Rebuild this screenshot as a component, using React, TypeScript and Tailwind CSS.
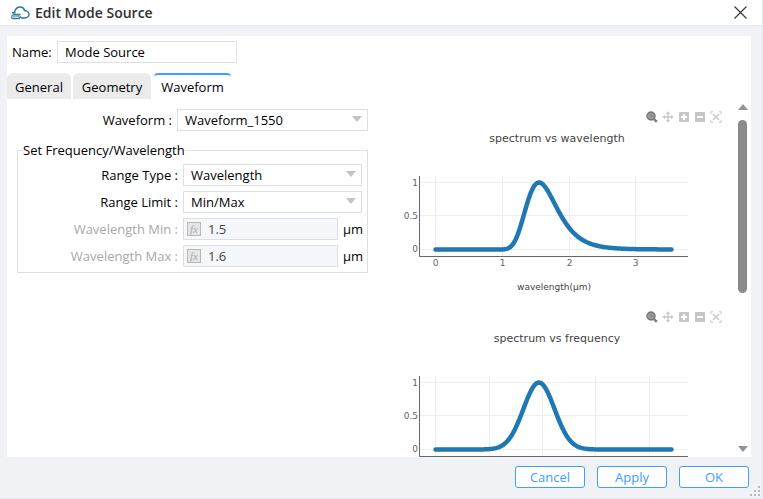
import React from "react";

const line = (f: (t: number) => number) => {
  const points: string[] = [];
  for (let i = 0; i <= 236; i++) {
    points.push(`${51.5 + i},${(149.5 - 67 * f(i)).toFixed(2)}`);
  }
  return "M" + points.join("L");
};

const CENTER = 193.4;
const SIGMA = 29;
const gauss = (f: number) => Math.exp(-((f - CENTER) ** 2) / (2 * SIGMA ** 2));
const wavelengthPath = line((t) => (t === 0 ? 0 : gauss(299.79 / (t / 66.8))));
const frequencyPath = line((t) => gauss((t / 53.5) * 100));

function Toolbar() {
  return (
    <div className="flex gap-1 pt-3 pl-[262px]">
      <button type="button" aria-label="Zoom" className="size-3 text-[#7b7b7b]">
        <svg viewBox="0 0 12 12" className="size-3">
          <circle cx="5" cy="5" r="3.8" fill="#a4a4a4" stroke="currentColor" strokeWidth="1.9" />
          <path d="M3.5 5h3M5 3.5v3" stroke="currentColor" />
          <path d="M7.8 7.8l3 3" stroke="currentColor" strokeWidth="2.4" />
        </svg>
      </button>
      <button type="button" aria-label="Pan" className="size-3 text-[#cacaca]">
        <svg viewBox="0 0 12 12" className="size-3">
          <path d="M6 1.5v9M1.5 6h9" stroke="currentColor" strokeWidth="1.4" />
          <path d="M6 .3L8.2 3H3.8zM6 11.7L8.2 9H3.8zM.3 6L3 3.8v4.4zM11.7 6L9 3.8v4.4z" fill="currentColor" />
        </svg>
      </button>
      <button type="button" aria-label="Zoom in" className="size-3 text-[#c6c6c6]">
        <svg viewBox="0 0 12 12" className="size-3">
          <rect x="1" y="1" width="10" height="10" rx=".5" fill="currentColor" />
          <path d="M6 3v6M3 6h6" stroke="#fff" strokeWidth="1.8" />
        </svg>
      </button>
      <button type="button" aria-label="Zoom out" className="size-3 text-[#c6c6c6]">
        <svg viewBox="0 0 12 12" className="size-3">
          <rect x="1" y="1" width="10" height="10" rx=".5" fill="currentColor" />
          <path d="M3 6h6" stroke="#fff" strokeWidth="1.8" />
        </svg>
      </button>
      <button type="button" aria-label="Autoscale" className="size-3 text-[#c6c6c6]">
        <svg viewBox="0 0 12 12" className="size-3" fill="none" stroke="currentColor">
          <path d="M.8 3.2V.8h2.4M8.8.8h2.4v2.4M11.2 8.8v2.4H8.8M3.2 11.2H.8V8.8" />
          <path d="M3 3l6 6M9 3L3 9" strokeWidth="1.4" />
        </svg>
      </button>
    </div>
  );
}

function Chart({
  title,
  path,
  grid,
  labels,
  axis,
}: {
  title: string;
  path: string;
  grid: number[];
  labels: string[];
  axis: string;
}) {
  return (
    <figure className="h-[200px] shrink-0 font-['DejaVu_Sans',sans-serif]">
      <Toolbar />
      <svg width="353" height="200" className="-mt-[23px] block pointer-events-none" role="img" aria-label={title}>
        <text x="173" y="42" fontSize="11" fill="#444" textAnchor="middle">{title}</text>
        <path d="M36 82.5h268M36 115.5h268M36 149.5h268" stroke="#eee" />
        {grid.map((x) => (
          <path key={x} d={`M${x} 76v80`} stroke="#eee" />
        ))}
        <path d="M35.5 76v80.5H304" fill="none" stroke="#666" />
        <path d={path} fill="none" stroke="#1f77b4" strokeWidth="4.5" strokeLinecap="round" strokeLinejoin="round" />
        <g fontSize="9" fill="#666" textAnchor="end">
          <text x="34" y="86">1</text>
          <text x="34" y="119">0.5</text>
          <text x="34" y="152">0</text>
        </g>
        <g fontSize="9" textAnchor="middle">
          {labels.map((label, i) => (
            <text key={label} x={grid[i]} y="166" fill="#666">{label}</text>
          ))}
          <text x="170" y="190" fill="#444">{axis}</text>
        </g>
      </svg>
    </figure>
  );
}

function SelectRow({ id, label, value, width }: { id: string; label: string; value: string; width: string }) {
  return (
    <div className="flex items-center justify-end gap-[5px]">
      <label htmlFor={id}>{label} :</label>
      <div className={`relative ${width}`}>
        <select
          id={id}
          className="block h-[22px] w-full appearance-none border border-[#dcdfe6] bg-white pl-[7px] text-[13px] leading-5 outline-none"
        >
          <option>{value}</option>
        </select>
        <svg viewBox="0 0 10 6" className="pointer-events-none absolute top-[7px] right-1.5 h-1.5 w-2.5">
          <path d="M0 0h10L5 6z" fill="#c0c4cc" />
        </svg>
      </div>
    </div>
  );
}

function ValueRow({ id, label, value }: { id: string; label: string; value: string }) {
  return (
    <div className="flex items-center justify-end gap-[5px]">
      <label htmlFor={id} className="text-[#a8a8a8]">{label} :</label>
      <div className="flex w-[179px] items-center gap-[5px]">
        <div className="flex h-[22px] w-[155px] shrink-0 items-center gap-1 border border-[#dcdfe6] bg-[#f5f7fa] pl-[3px]">
          <button
            type="button"
            disabled
            aria-label="Expression"
            className="flex size-3.5 shrink-0 items-center justify-center border border-[#b8b8b8] bg-[#e6e6e6] font-['Liberation_Serif',serif] text-[11px] leading-none text-[#aaa] italic"
          >
            fx
          </button>
          <input id={id} disabled value={value} className="w-full min-w-0 bg-transparent pl-[3px] text-[#444]" />
        </div>
        <span>μm</span>
      </div>
    </div>
  );
}

export default function App() {
  return (
    <div className="flex h-screen flex-col overflow-hidden border-r border-b border-[#e4e7ed] bg-[#f0f2f5] font-['Open_Sans','Noto_Sans_CJK_SC',sans-serif] text-[13px] leading-5 text-black">
      <header className="flex h-[26px] shrink-0 items-center border-b border-[#e4e7ed] bg-white pr-[15px] pl-2.5">
        <svg viewBox="0 0 20 14" className="h-3.5 w-5" fill="none">
          <path d="M4.500 6C5.500 3 7 1 10 1c2.500 0 4 1.500 4.500 3.500 2.500.2 4.500 2 4.500 4s-2 3.500-4 3.500H11" stroke="#2477a3" strokeWidth="1.400" />
          <path d="M2 6.700h3.500M2.500 8.500h8" stroke="#3a7f9f" strokeWidth="1.400" />
          <path d="M1 10h9" stroke="#7a98a6" strokeWidth="1.500" />
          <path d="M1 11.500l2 1h6l2-2" stroke="#2477a3" strokeWidth="1.300" />
        </svg>
        <h1 className="ml-[5px] flex-1 text-[14px] font-semibold text-[#303133]">Edit Mode Source</h1>
        <button type="button" aria-label="Close">
          <svg viewBox="0 0 13 13" className="size-[13px]" stroke="#333" strokeWidth="1.1">
            <path d="M.5.5l12 12M12.500.5l-12 12" />
          </svg>
        </button>
      </header>

      <main className="mt-2.5 mr-[11px] ml-[7px] flex min-h-0 flex-1 flex-col bg-white">
        <div className="flex items-center pt-[5px] pl-[5px]">
          <label htmlFor="name" className="w-[45px]">Name:</label>
          <input id="name" defaultValue="Mode Source" className="h-[22px] w-[180px] border border-[#dcdfe6] px-[7px] outline-none" />
        </div>

        <div role="tablist" className="mt-2.5 flex h-[26px] shrink-0 gap-0.5">
          <button type="button" role="tab" aria-selected="false" className="w-16 rounded-t-md bg-[#ebebeb] pt-0.5">General</button>
          <button type="button" role="tab" aria-selected="false" className="w-[78px] rounded-t-md bg-[#ebebeb] pt-0.5">Geometry</button>
          <button type="button" role="tab" aria-selected="true" className="ml-px w-[77px] rounded-t-sm border-t-2 border-[#409eff] bg-white">Waveform</button>
        </div>

        <div className="flex min-h-0 flex-1">
          <form className="w-[361px] shrink-0 pt-2.5 pl-2.5">
            <SelectRow id="waveform" label="Waveform" value="Waveform_1550" width="w-[191px]" />
            <fieldset className="mt-2.5 flex flex-col gap-[5px] border border-[#dcdfe6] pt-[5px] pr-[5px] pb-[5px]">
              <legend className="ml-[5px] h-[18px] leading-[18px]">Set Frequency/Wavelength</legend>
              <SelectRow id="type" label="Range Type" value="Wavelength" width="w-[179px]" />
              <SelectRow id="limit" label="Range Limit" value="Min/Max" width="w-[179px]" />
              <ValueRow id="min" label="Wavelength Min" value="1.5" />
              <ValueRow id="max" label="Wavelength Max" value="1.6" />
            </fieldset>
          </form>

          <section className="ml-4 flex min-w-0 flex-1 flex-col overflow-hidden">
            <Chart
              title="spectrum vs wavelength"
              path={wavelengthPath}
              grid={[51.5, 118.5, 185.5, 251.5]}
              labels={["0", "1", "2", "3"]}
              axis="wavelength(μm)"
            />
            <Chart
              title="spectrum vs frequency"
              path={frequencyPath}
              grid={[51.5, 105.5, 158.5, 211.5, 265.5]}
              labels={[]}
              axis=""
            />
          </section>

          <div className="flex w-[17px] shrink-0 flex-col items-center pt-[5px] pb-[5px]">
            <svg viewBox="0 0 10 6" className="h-1.5 w-2.5"><path d="M0 6h10L5 0z" fill="#909399" /></svg>
            <div className="mt-2.5 h-[173px] w-[9px] rounded-full bg-[#8b8b8b]" />
            <svg viewBox="0 0 10 6" className="mt-auto h-1.5 w-2.5"><path d="M0 0h10L5 6z" fill="#909399" /></svg>
          </div>
        </div>
      </main>

      <footer className="relative flex h-[41px] shrink-0 justify-end gap-3 pt-[9px] pr-[13px]">
        {["Cancel", "Apply", "OK"].map((name) => (
          <button key={name} type="button" className="h-[22px] w-[70px] rounded-[3px] border border-[#409eff] bg-white leading-5 text-[#409eff]">
            {name}
          </button>
        ))}
        <svg viewBox="0 0 10 10" className="absolute right-0.5 bottom-0.5 size-2.5" fill="#b8b8b8">
          <path d="M8 0h2v2H8zM4 4h2v2H4zM8 4h2v2H8zM0 8h2v2H0zM4 8h2v2H4zM8 8h2v2H8z" />
        </svg>
      </footer>
    </div>
  );
}
